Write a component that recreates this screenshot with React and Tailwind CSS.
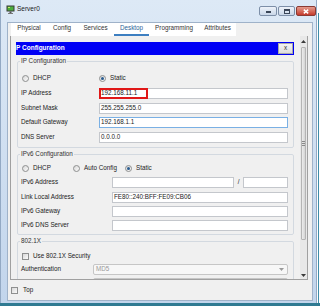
import React from 'react';

const Radio = ({ checked }) => (
  <span className="w-[7px] h-[7px] shrink-0 rounded-full border border-[#8e8f8f] bg-linear-to-br from-[#d8d8d8] to-[#fbfbfb] flex items-center justify-center">
    {checked && <span className="w-[3px] h-[3px] rounded-full bg-[#2a5c8f]" />}
  </span>
);

const Check = () => (
  <span className="w-[7px] h-[7px] shrink-0 border border-[#8e8f8f] bg-linear-to-br from-[#d8d8d8] to-[#fbfbfb]" />
);

const Field = ({ value = '', w, focused, children }) => (
  <div
    className={`relative h-[11px] ${w} shrink-0 bg-white border ${focused ? 'border-[#7ab0e4]' : 'border-[#c4c7cc]'} flex items-center pl-[1px] text-[#222]`}
  >
    {value}
    {children}
  </div>
);

const Row = ({ label, lw, mt, children }) => (
  <div className={`flex items-center h-[11px] pl-[3px] ${mt}`}>
    <span className={`${lw} shrink-0`}>{label}</span>
    {children}
  </div>
);

const Arrow = ({ up }) => (
  <svg width="5" height="3" viewBox="0 0 5 3">
    <polygon points={up ? '0,3 5,3 2.5,0' : '0,0 5,0 2.5,3'} fill="#3a3a3a" />
  </svg>
);

const tabs = [
  { name: 'Physical', w: 'w-[36px]' },
  { name: 'Config', w: 'w-[30px]' },
  { name: 'Services', w: 'w-[37px]' },
  { name: 'Desktop', w: 'w-[35px]', active: true },
  { name: 'Programming', w: 'w-[50px]' },
  { name: 'Attributes', w: 'w-[37px]' },
];

export default function App() {
  return (
    <div className="w-[320px] h-[306px] bg-white flex flex-col overflow-hidden font-['Liberation_Sans',Arial,sans-serif] text-[6.3px] leading-none text-[#222]">
      <div className="flex h-[303px]">
        <div className="w-[317px] h-[303px] flex flex-col bg-linear-to-b from-[#dde9f6] to-[#c2d5ec] border-l border-r border-[#93a9c4]">
          {/* title bar */}
          <div className="h-[22px] flex items-start">
            <div className="flex items-center pl-[5px] pt-[5px] gap-[2px]">
              <svg width="9" height="9" viewBox="0 0 9 9">
                <rect x="0.5" y="0.5" width="8" height="6" fill="#3b3b3b" />
                <rect x="1.5" y="1.5" width="6" height="4" fill="#4caf3c" />
                <rect x="2" y="2" width="2" height="1" fill="#c8e86a" />
                <rect x="3.5" y="6.5" width="2" height="1.5" fill="#555" />
                <rect x="2" y="8" width="5" height="1" fill="#777" />
              </svg>
              <span className="text-[6.5px] text-[#1b1b1b]">Server0</span>
            </div>
            <div className="ml-auto flex pt-[6px] gap-[1px]">
              <div className="w-[18px] h-[10px] rounded-[2px] border border-[#7d8fa8] bg-linear-to-b from-[#eef3fa] to-[#c9d7e8] flex items-end justify-center pb-[2px]">
                <span className="w-[5px] h-[2px] bg-[#3a4658]" />
              </div>
              <div className="w-[17px] h-[10px] rounded-[2px] border border-[#7d8fa8] bg-linear-to-b from-[#eef3fa] to-[#c9d7e8] flex items-center justify-center">
                <span className="w-[6px] h-[5px] border border-[#3a4658] border-t-2" />
              </div>
              <div className="w-[20px] h-[10px] rounded-[2px] border border-[#8a3a33] bg-linear-to-b from-[#e49a8c] to-[#c4392c] flex items-center justify-center">
                <svg width="6" height="5" viewBox="0 0 6 5">
                  <path d="M0.8 0.6 L5.2 4.4 M5.2 0.6 L0.8 4.4" stroke="#fff" strokeWidth="1.4" />
                </svg>
              </div>
            </div>
          </div>

          {/* client area */}
          <div className="ml-[6px] mr-[3px] h-[279px] bg-[#f0f0f0] border border-[#9fb2c9] flex flex-col">
            {/* tabs */}
            <div className="pl-[3px] flex">
              <div className="flex bg-white h-[13px]">
                {tabs.map((t) => (
                  <div
                    key={t.name}
                    className={`${t.w} h-[13px] flex items-center justify-center border-b-2 ${t.active ? 'border-[#3d7fc1] text-[#2b5f97]' : 'border-transparent text-[#333]'}`}
                  >
                    {t.name}
                  </div>
                ))}
              </div>
            </div>

            {/* panel */}
            <div className="ml-[2px] w-[298px] h-[244px] flex border-l border-r border-b border-[#a0a0a0]">
              <div className="w-[289px] h-[243px] overflow-hidden pt-[6px] flex flex-col">
                <div className="ml-[5px] w-[278px] h-[13px] shrink-0 bg-[#0000f5] flex items-center">
                  <span className="font-bold text-white text-[6.5px]">P Configuration</span>
                  <div className="ml-auto mr-[1px] w-[15px] h-[11px] border border-[#a8a8a8] bg-linear-to-b from-[#f4f4f4] to-[#dcdcdc] flex items-center justify-center text-[#333]">
                    x
                  </div>
                </div>

                {/* IPv4 */}
                <fieldset className="mt-[2px] ml-[6px] w-[277px] shrink-0 border border-[#d3d9e0] rounded-[2px] pb-[4px]">
                  <legend className="ml-[2px] px-[1px] leading-[8px] text-[#333]">IP Configuration</legend>
                  <div className="mt-[8px] h-[10px] pl-[4px] flex items-center">
                    <div className="w-[77px] flex items-center gap-[4px]">
                      <Radio />
                      <span>DHCP</span>
                    </div>
                    <div className="flex items-center gap-[4px]">
                      <Radio checked />
                      <span>Static</span>
                    </div>
                  </div>
                  <Row label="IP Address" lw="w-[78px]" mt="mt-[5px]">
                    <Field value="192.168.11.1" w="w-[189px]">
                      <span className="absolute -left-[1px] -top-[1px] w-[49px] h-[11px] border-2 border-[#e01818]" />
                    </Field>
                  </Row>
                  <Row label="Subnet Mask" lw="w-[78px]" mt="mt-[4px]">
                    <Field value="255.255.255.0" w="w-[189px]" />
                  </Row>
                  <Row label="Default Gateway" lw="w-[78px]" mt="mt-[3px]">
                    <Field value="192.168.1.1" w="w-[189px]" focused />
                  </Row>
                  <Row label="DNS Server" lw="w-[78px]" mt="mt-[4px]">
                    <Field value="0.0.0.0" w="w-[189px]" />
                  </Row>
                </fieldset>

                {/* IPv6 */}
                <fieldset className="mt-[2px] ml-[6px] w-[277px] shrink-0 border border-[#d3d9e0] rounded-[2px] pb-[3px]">
                  <legend className="ml-[2px] px-[1px] leading-[8px] text-[#333]">IPv6 Configuration</legend>
                  <div className="mt-[5px] h-[10px] pl-[4px] flex items-center">
                    <div className="w-[51px] flex items-center gap-[4px]">
                      <Radio />
                      <span>DHCP</span>
                    </div>
                    <div className="w-[52px] flex items-center gap-[4px]">
                      <Radio />
                      <span>Auto Config</span>
                    </div>
                    <div className="flex items-center gap-[4px]">
                      <Radio checked />
                      <span>Static</span>
                    </div>
                  </div>
                  <Row label="IPv6 Address" lw="w-[91px]" mt="mt-[4px]">
                    <Field w="w-[122px]" />
                    <span className="w-[9px] text-center">/</span>
                    <Field w="w-[45px]" />
                  </Row>
                  <Row label="Link Local Address" lw="w-[91px]" mt="mt-[4px]">
                    <Field value="FE80::240:BFF:FE09:CB06" w="w-[176px]" />
                  </Row>
                  <Row label="IPv6 Gateway" lw="w-[91px]" mt="mt-[3px]">
                    <Field w="w-[176px]" />
                  </Row>
                  <Row label="IPv6 DNS Server" lw="w-[91px]" mt="mt-[3px]">
                    <Field w="w-[176px]" />
                  </Row>
                </fieldset>

                {/* 802.1X */}
                <fieldset className="mt-[2px] ml-[6px] w-[277px] shrink-0 border border-[#d3d9e0] rounded-[2px]">
                  <legend className="ml-[2px] px-[1px] leading-[8px] text-[#333]">802.1X</legend>
                  <div className="mt-[7px] h-[8px] pl-[4px] flex items-center gap-[4px]">
                    <Check />
                    <span>Use 802.1X Security</span>
                  </div>
                  <Row label="Authentication" lw="w-[72px]" mt="mt-[4px]">
                    <div className="w-[195px] h-[11px] rounded-[2px] border border-[#c6c6c6] bg-[#f7f7f7] flex items-center pl-[2px] pr-[3px] text-[#9a9a9a]">
                      MD5
                      <span className="ml-auto">
                        <svg width="5" height="3" viewBox="0 0 5 3">
                          <polygon points="0,0 5,0 2.5,3" fill="#9a9a9a" />
                        </svg>
                      </span>
                    </div>
                  </Row>
                  <div className="mt-[3px] ml-[75px] w-[195px] h-[11px] rounded-[2px] border border-[#c6c6c6] bg-[#f7f7f7]" />
                </fieldset>
              </div>

              {/* scrollbar */}
              <div className="w-[7px] h-[243px] bg-[#e8e8e8] flex flex-col items-center">
                <div className="h-[10px] flex items-center justify-center">
                  <Arrow up />
                </div>
                <div className="mt-[1px] w-[5px] h-[193px] rounded-[1px] border border-[#b4b4b4] bg-linear-to-r from-[#ececec] to-[#d4d4d4] flex flex-col items-center justify-center gap-[1px]">
                  <span className="w-[3px] h-[1px] bg-[#8a8a8a]" />
                  <span className="w-[3px] h-[1px] bg-[#8a8a8a]" />
                  <span className="w-[3px] h-[1px] bg-[#8a8a8a]" />
                </div>
                <div className="flex-1" />
                <div className="h-[8px] flex items-center justify-center">
                  <Arrow />
                </div>
              </div>
            </div>

            {/* bottom */}
            <div className="mt-[6px] pl-[3px] h-[8px] flex items-center gap-[5px]">
              <Check />
              <span>Top</span>
            </div>
          </div>
        </div>
        <div className="flex-1 flex">
          <div className="ml-[1px] mt-[13px] w-[1px] bg-[#3f8ca8]" />
        </div>
      </div>
      <div className="h-[3px] bg-[#2f7a92]" />
    </div>
  );
}
